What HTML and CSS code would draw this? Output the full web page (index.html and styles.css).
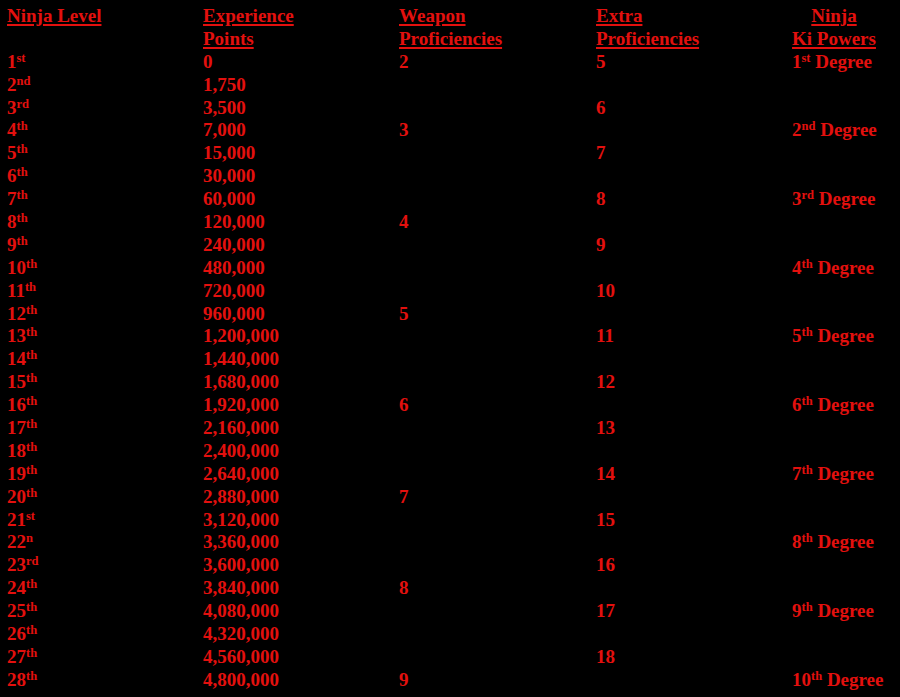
FILE: index.html
```html
<!DOCTYPE html>
<html>
<head>
<meta charset="utf-8">
<link rel="stylesheet" href="styles.css">
</head>
<body>
<div class="table">
  <div class="hd">Ninja Level</div>
  <div class="hd">Experience<br>Points</div>
  <div class="hd">Weapon<br>Proficiencies</div>
  <div class="hd">Extra<br>Proficiencies</div>
  <div class="hd center">Ninja<br>Ki Powers</div>

  <div>1<sup>st</sup></div><div>0</div><div>2</div><div>5</div><div>1<sup>st</sup> Degree</div>
  <div>2<sup>nd</sup></div><div>1,750</div><div></div><div></div><div></div>
  <div>3<sup>rd</sup></div><div>3,500</div><div></div><div>6</div><div></div>
  <div>4<sup>th</sup></div><div>7,000</div><div>3</div><div></div><div>2<sup>nd</sup> Degree</div>
  <div>5<sup>th</sup></div><div>15,000</div><div></div><div>7</div><div></div>
  <div>6<sup>th</sup></div><div>30,000</div><div></div><div></div><div></div>
  <div>7<sup>th</sup></div><div>60,000</div><div></div><div>8</div><div>3<sup>rd</sup> Degree</div>
  <div>8<sup>th</sup></div><div>120,000</div><div>4</div><div></div><div></div>
  <div>9<sup>th</sup></div><div>240,000</div><div></div><div>9</div><div></div>
  <div>10<sup>th</sup></div><div>480,000</div><div></div><div></div><div>4<sup>th</sup> Degree</div>
  <div>11<sup>th</sup></div><div>720,000</div><div></div><div>10</div><div></div>
  <div>12<sup>th</sup></div><div>960,000</div><div>5</div><div></div><div></div>
  <div>13<sup>th</sup></div><div>1,200,000</div><div></div><div>11</div><div>5<sup>th</sup> Degree</div>
  <div>14<sup>th</sup></div><div>1,440,000</div><div></div><div></div><div></div>
  <div>15<sup>th</sup></div><div>1,680,000</div><div></div><div>12</div><div></div>
  <div>16<sup>th</sup></div><div>1,920,000</div><div>6</div><div></div><div>6<sup>th</sup> Degree</div>
  <div>17<sup>th</sup></div><div>2,160,000</div><div></div><div>13</div><div></div>
  <div>18<sup>th</sup></div><div>2,400,000</div><div></div><div></div><div></div>
  <div>19<sup>th</sup></div><div>2,640,000</div><div></div><div>14</div><div>7<sup>th</sup> Degree</div>
  <div>20<sup>th</sup></div><div>2,880,000</div><div>7</div><div></div><div></div>
  <div>21<sup>st</sup></div><div>3,120,000</div><div></div><div>15</div><div></div>
  <div>22<sup>n</sup></div><div>3,360,000</div><div></div><div></div><div>8<sup>th</sup> Degree</div>
  <div>23<sup>rd</sup></div><div>3,600,000</div><div></div><div>16</div><div></div>
  <div>24<sup>th</sup></div><div>3,840,000</div><div>8</div><div></div><div></div>
  <div>25<sup>th</sup></div><div>4,080,000</div><div></div><div>17</div><div>9<sup>th</sup> Degree</div>
  <div>26<sup>th</sup></div><div>4,320,000</div><div></div><div></div><div></div>
  <div>27<sup>th</sup></div><div>4,560,000</div><div></div><div>18</div><div></div>
  <div>28<sup>th</sup></div><div>4,800,000</div><div>9</div><div></div><div>10<sup>th</sup> Degree</div>
</div>
</body>
</html>
```

FILE: styles.css
```css
html, body {
  margin: 0;
  background: #000;
}
body {
  padding: 5px 0 0 7px;
  font-family: "Liberation Serif", "Times New Roman", serif;
  font-weight: bold;
  font-size: 19px;
  line-height: 22.9px;
  color: #e3100e;
}
.table {
  display: grid;
  grid-template-columns: 196px 196px 197px 196px 84px;
  grid-auto-rows: 22.9px;
}
.table > div {
  white-space: nowrap;
}
.table > .hd {
  grid-row: span 2;
  text-decoration: underline;
  text-decoration-thickness: 1.5px;
  text-underline-offset: 2px;
}
.table > .center {
  text-align: center;
}
sup {
  font-size: 12.5px;
  line-height: 0;
  vertical-align: 6.5px;
}
```
